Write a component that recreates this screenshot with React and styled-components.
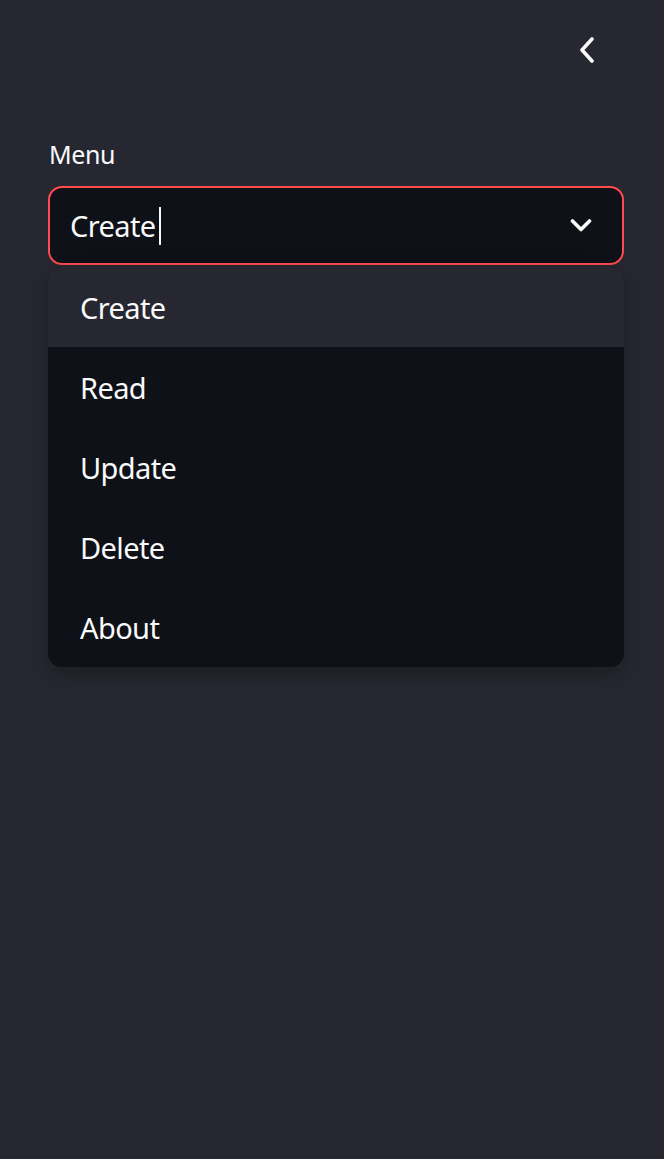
import React from 'react';
import styled, { createGlobalStyle } from 'styled-components';

const GlobalStyle = createGlobalStyle`
    html, body {
        margin: 0;
        padding: 0;
        background: #262730;
    }
    body {
        font-family: "Noto Sans", "Open Sans", sans-serif;
        color: #fafafa;
    }
`;

const Sidebar = styled.div`
    width: 664px;
    height: 1159px;
    background: #262730;
    box-sizing: border-box;
    padding: 0 40px 0 48px;
`;

const Header = styled.div`
    display: flex;
    justify-content: flex-end;
    height: 100px;
    padding-top: 30px;
    box-sizing: border-box;
`;

const CollapseButton = styled.button`
    width: 40px;
    height: 40px;
    margin-right: 17px;
    border: none;
    background: transparent;
    color: #fafafa;
    display: flex;
    align-items: center;
    justify-content: center;
    padding: 0;
`;

const Label = styled.label`
    display: block;
    font-size: 25px;
    letter-spacing: -0.4px;
    line-height: 36px;
    margin-top: 36px;
    margin-bottom: 14px;
    padding-left: 1px;
`;

const SelectWrap = styled.div`
    position: relative;
    width: 576px;
`;

const SelectBox = styled.div`
    height: 79px;
    box-sizing: border-box;
    border: 2px solid #ff4b4b;
    border-radius: 14px;
    background: #0e1117;
    display: flex;
    align-items: center;
    padding: 0 30px 0 20px;
`;

const Value = styled.span`
    font-size: 29px;
    letter-spacing: -0.6px;
    flex: 1;
    display: flex;
    align-items: center;
`;

const Caret = styled.span`
    display: inline-block;
    width: 2px;
    height: 38px;
    background: #fafafa;
    margin-left: 3px;
`;

const Menu = styled.ul`
    position: absolute;
    top: 81px;
    left: 0;
    right: 0;
    margin: 0;
    padding: 0;
    list-style: none;
    background: #0e1117;
    border-radius: 14px;
    overflow: hidden;
    box-shadow: 0 8px 24px rgba(0, 0, 0, 0.25);
`;

const Option = styled.li`
    height: 80px;
    display: flex;
    align-items: center;
    padding-left: 32px;
    font-size: 29px;
    letter-spacing: -0.6px;
    background: ${props => (props.active ? '#262730' : '#0e1117')};
`;

const ChevronLeft = () => (
    <svg width="16" height="26" viewBox="0 0 16 26" fill="none">
        <path d="M13 2L3 13l10 11" stroke="currentColor" strokeWidth="3.6" strokeLinecap="round" strokeLinejoin="round" />
    </svg>
);

const ChevronDown = () => (
    <svg width="22" height="15" viewBox="0 0 22 15" fill="none">
        <path d="M2.5 3l8.5 8.5L19.5 3" stroke="currentColor" strokeWidth="3.6" strokeLinecap="round" strokeLinejoin="round" />
    </svg>
);

const options = ['Create', 'Read', 'Update', 'Delete', 'About'];

export default function App() {
    return (
        <>
            <GlobalStyle />
            <Sidebar>
                <Header>
                    <CollapseButton>
                        <ChevronLeft />
                    </CollapseButton>
                </Header>
                <Label>Menu</Label>
                <SelectWrap>
                    <SelectBox>
                        <Value>
                            Create
                            <Caret />
                        </Value>
                        <ChevronDown />
                    </SelectBox>
                    <Menu>
                        {options.map((o, i) => (
                            <Option key={o} active={i === 0}>
                                {o}
                            </Option>
                        ))}
                    </Menu>
                </SelectWrap>
            </Sidebar>
        </>
    );
}
